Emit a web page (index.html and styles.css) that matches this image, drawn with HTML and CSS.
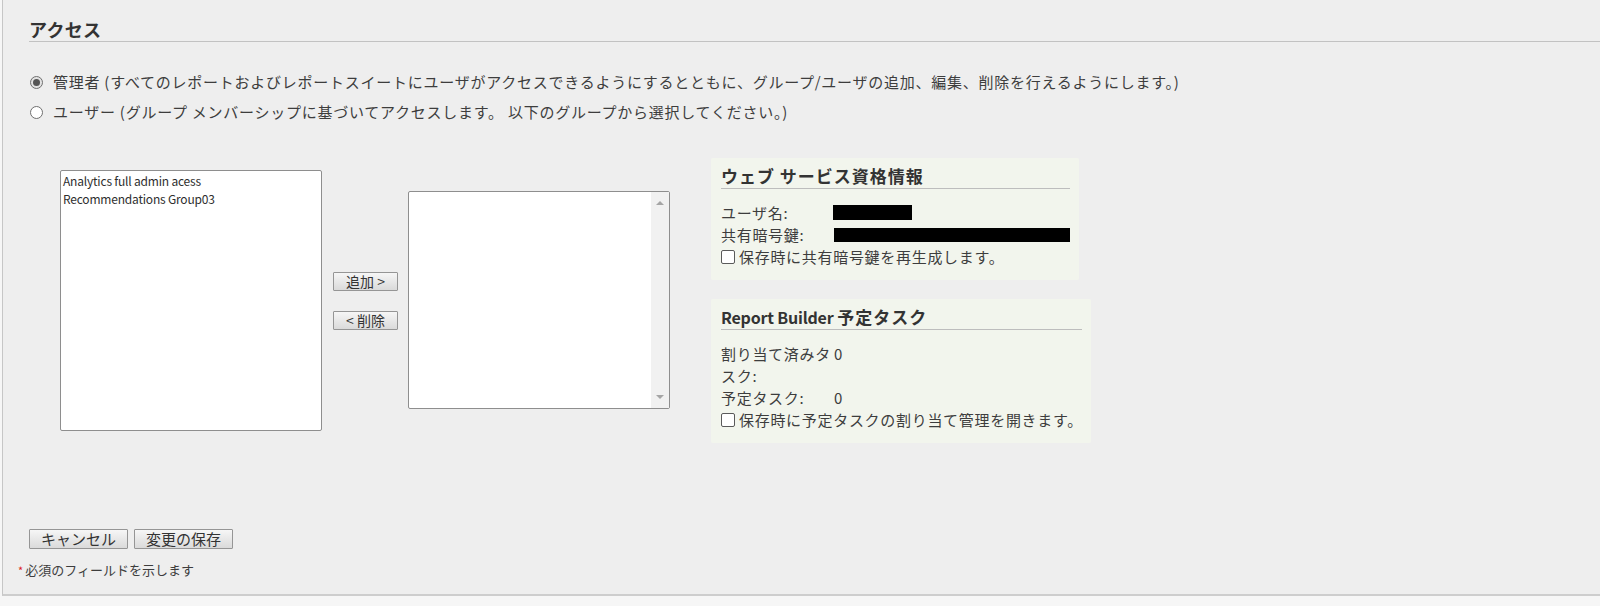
FILE: index.html
```html
<!DOCTYPE html>
<html lang="ja">
<head>
<meta charset="utf-8">
<title>アクセス</title>
<link rel="stylesheet" href="styles.css">
</head>
<body>
<div class="frame">
  <h2 class="heading">アクセス</h2>
  <div class="radios">
    <div class="radio-row"><span class="radio checked"></span><span>管理者 (すべてのレポートおよびレポートスイートにユーザがアクセスできるようにするとともに、グループ/ユーザの追加、編集、削除を行えるようにします。)</span></div>
    <div class="radio-row"><span class="radio"></span><span>ユーザー (グループ メンバーシップに基づいてアクセスします。 以下のグループから選択してください。)</span></div>
  </div>
  <div class="main">
    <div class="listbox left-list">
      <div class="opt">Analytics full admin acess</div>
      <div class="opt">Recommendations Group03</div>
    </div>
    <div class="move-buttons">
      <button class="btn move">追加 &gt;</button>
      <button class="btn move">&lt; 削除</button>
    </div>
    <div class="listbox right-list">
      <div class="scrollbar"><span class="arrow up"></span><span class="arrow down"></span></div>
    </div>
    <div class="panels">
      <div class="panel p1">
        <div class="panel-title"><span class="jp">ウェブ サービス資格情報</span></div>
        <div class="grid">
          <div class="lbl">ユーザ名:</div><div class="val"><span class="mask m1"></span></div>
          <div class="lbl">共有暗号鍵:</div><div class="val"><span class="mask m2"></span></div>
          <div class="check-row"><span class="checkbox"></span>保存時に共有暗号鍵を再生成します。</div>
        </div>
      </div>
      <div class="panel p2">
        <div class="panel-title"><span class="en">Report Builder</span> <span class="jp">予定タスク</span></div>
        <div class="grid">
          <div class="lbl">割り当て済みタスク:</div><div class="val">0</div>
          <div class="lbl">予定タスク:</div><div class="val">0</div>
          <div class="check-row"><span class="checkbox"></span>保存時に予定タスクの割り当て管理を開きます。</div>
        </div>
      </div>
    </div>
  </div>
  <div class="actions">
    <button class="btn action">キャンセル</button>
    <button class="btn action">変更の保存</button>
  </div>
  <p class="note"><span class="star">*</span>必須のフィールドを示します</p>
</div>
</body>
</html>
```
FILE: styles.css
```css
html, body {
  margin: 0;
  padding: 0;
}
body {
  background: #f6f6f6;
  font-family: "Noto Sans CJK JP", "Noto Sans", sans-serif;
  color: #3d3d3d;
  font-size: 15px;
}
.frame {
  margin-left: 2px;
  box-sizing: border-box;
  border-left: 1px solid #c6c6c6;
  border-bottom: 2px solid #cdcdcd;
  background: #eeeeee;
  padding: 17px 0 0 26px;
  height: 596px;
}
.heading {
  margin: 0;
  font-size: 18px;
  font-weight: bold;
  line-height: 24px;
  color: #333;
  letter-spacing: 0.3px;
  border-bottom: 1px solid #c2c2c2;
}
.radios {
  margin-top: 25px;
}
.radio-row {
  display: flex;
  align-items: center;
  height: 30px;
  line-height: 30px;
  white-space: nowrap;
  letter-spacing: 0.75px;
}
.radio {
  width: 11px;
  height: 11px;
  border: 1px solid #6f6f6f;
  border-radius: 50%;
  background: #fff;
  margin-left: 1px;
  margin-right: 10px;
  position: relative;
  flex: none;
}
.radio.checked {
  background: #e2e2e2;
}
.radio.checked::after {
  content: "";
  position: absolute;
  left: 2px;
  top: 2px;
  width: 7px;
  height: 7px;
  border-radius: 50%;
  background: #555;
}
.main {
  display: flex;
  align-items: flex-start;
  margin-top: 31px;
}
.listbox {
  background: #fff;
  border: 1px solid #8e8e8e;
  box-sizing: border-box;
  border-radius: 2px;
}
.left-list {
  margin-left: 31px;
  margin-top: 12px;
  width: 262px;
  height: 261px;
  padding: 1px 2px;
}
.opt {
  font-size: 12px;
  line-height: 18px;
  letter-spacing: -0.2px;
  color: #2e2e2e;
}
.move-buttons {
  display: flex;
  flex-direction: column;
  gap: 20px;
  margin-left: 11px;
  margin-top: 114px;
}
.btn {
  font-family: "Noto Sans CJK JP", "Noto Sans", sans-serif;
  color: #333;
  background: linear-gradient(#f6f6f6, #dadada);
  border: 1px solid #959595;
  border-radius: 1px;
  padding: 0;
  box-sizing: border-box;
}
.btn.move {
  width: 65px;
  height: 19px;
  font-size: 14px;
  line-height: 17px;
}
.right-list {
  margin-left: 10px;
  margin-top: 33px;
  width: 262px;
  height: 218px;
  display: flex;
  justify-content: flex-end;
}
.scrollbar {
  width: 18px;
  height: 100%;
  background: #f1f1f1;
  position: relative;
}
.arrow {
  position: absolute;
  left: 5px;
  width: 0;
  height: 0;
  border-left: 4px solid transparent;
  border-right: 4px solid transparent;
}
.arrow.up {
  top: 9px;
  border-bottom: 4px solid #a5a5a5;
}
.arrow.down {
  bottom: 9px;
  border-top: 4px solid #a5a5a5;
}
.panels {
  margin-left: 41px;
  display: flex;
  flex-direction: column;
  gap: 19px;
}
.panel {
  background: #f2f5ed;
  padding: 6px 9px 12px 10px;
  border-radius: 2px;
}
.p1 { width: 349px; }
.p2 { width: 361px; }
.panel-title {
  font-size: 17px;
  font-weight: bold;
  line-height: 24px;
  color: #333;
  border-bottom: 1px solid #bdbdbd;
  white-space: nowrap;
}
.panel-title .jp {
  letter-spacing: 1px;
}
.panel-title .en {
  font-size: 16px;
  letter-spacing: -0.2px;
}
.grid {
  display: grid;
  grid-template-columns: 112px auto;
  column-gap: 1px;
  margin-top: 13px;
  line-height: 22px;
  letter-spacing: 0.7px;
}
.mask {
  display: block;
  background: #000;
}
.m1 { width: 79px; height: 15px; margin-top: 3px; margin-left: -1px; }
.m2 { width: 236px; height: 14px; margin-top: 4px; }
.check-row {
  grid-column: 1 / -1;
  display: flex;
  align-items: center;
  white-space: nowrap;
}
.checkbox {
  width: 12px;
  height: 12px;
  border: 1px solid #5a5a5a;
  border-radius: 2px;
  background: #fff;
  margin-right: 4px;
  flex: none;
}
.actions {
  display: flex;
  gap: 6px;
  margin-top: 86px;
}
.btn.action {
  width: 99px;
  height: 20px;
  font-size: 15px;
  line-height: 18px;
}
.note {
  margin: 12px 0 0 -11px;
  font-size: 13px;
  line-height: 18px;
  color: #3d3d3d;
}
.star {
  color: #d22;
  margin-right: 2px;
  font-size: 11px;
}
```
